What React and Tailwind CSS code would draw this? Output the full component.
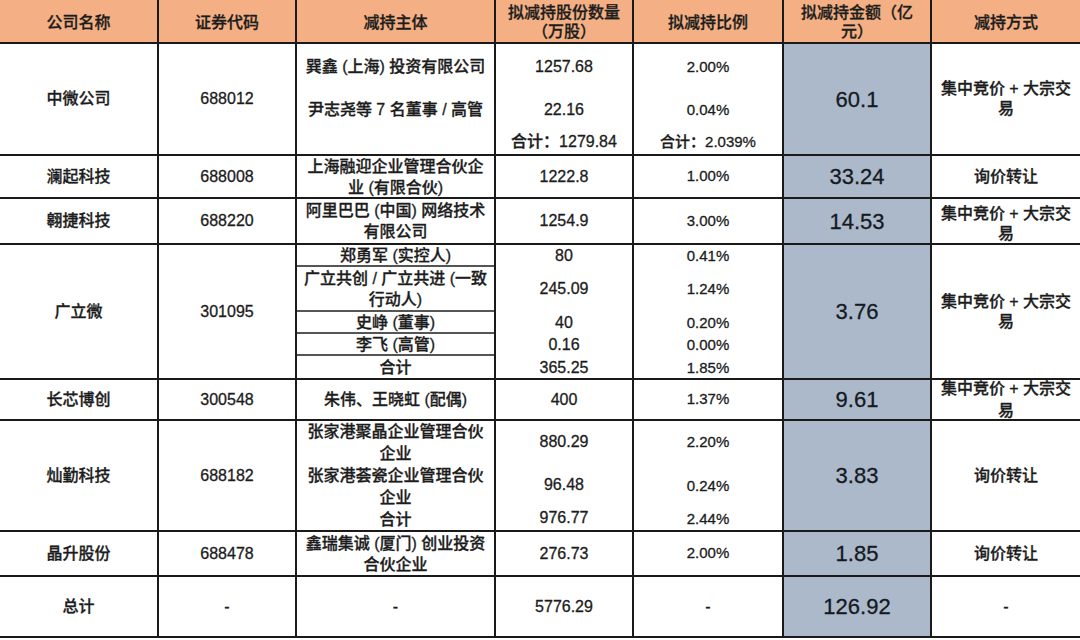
import React from "react";

function C({ children, className = "" }) {
  return (
    <div className={"bg-white flex items-center justify-center text-center " + className}>
      {children}
    </div>
  );
}

function H({ children }) {
  return (
    <div className="bg-[#f4b084] flex items-center justify-center text-center pt-[2px] px-[6px] leading-[19px]">
      <span>{children}</span>
    </div>
  );
}

function Big({ children }) {
  return (
    <div className="bg-[#acb9ca] flex items-center justify-center text-[22px] text-[#151a22]">
      {children}
    </div>
  );
}

function Blocks({ items, heights, pct }) {
  return (
    <div className="bg-white flex flex-col">
      {items.map((t, i) => (
        <div
          key={i}
          className={
            "flex items-center justify-center " + (pct ? "text-[15px] " : "") + (heights[i] === 0 ? "flex-1" : "")
          }
          style={heights[i] ? { height: heights[i] } : undefined}
        >
          {t}
        </div>
      ))}
    </div>
  );
}

function Sub({ items, lines }) {
  const hs = [20, 43, 20, 20, 22];
  return (
    <div className="bg-white flex flex-col">
      {items.map((t, i) => (
        <div
          key={i}
          className={
            "flex items-center justify-center text-center px-[6px] leading-[21px] " +
            (i > 0 ? (lines ? "border-t-2 border-[#555]" : "border-t-2 border-transparent") : "")
          }
          style={{ height: hs[i] + (i > 0 ? 2 : 0) }}
        >
          {t}
        </div>
      ))}
    </div>
  );
}

const MODE1 = "集中竞价 + 大宗交易";

export default function App() {
  return (
    <div className="w-[1080px] h-[640px] bg-white overflow-hidden font-['Liberation_Sans','Noto_Sans_CJK_SC',sans-serif] text-[16px] font-medium text-[#1c1c1c] [-webkit-text-stroke:0.3px_currentColor]">
      <div className="grid grid-cols-[157px_136px_197px_136px_148px_146px_148px] grid-rows-[42px_110px_41px_44px_133px_39px_109px_43px_59px] gap-[2px] bg-[#1a1a1a] pb-[2px]">
        {/* header */}
        <H>公司名称</H>
        <H>证券代码</H>
        <H>减持主体</H>
        <H>拟减持股份数量（万股）</H>
        <H>拟减持比例</H>
        <H>拟减持金额（亿元）</H>
        <H>减持方式</H>

        {/* 中微公司 */}
        <C>中微公司</C>
        <C>688012</C>
        <Blocks items={["巽鑫 (上海) 投资有限公司", "尹志尧等 7 名董事 / 高管", ""]} heights={[46, 40, 0]} />
        <Blocks items={["1257.68", "22.16", "合计：1279.84"]} heights={[46, 40, 0]} />
        <Blocks items={["2.00%", "0.04%", "合计：2.039%"]} heights={[46, 40, 0]} pct />
        <Big>60.1</Big>
        <C className="px-[8px] leading-[20px]">{MODE1}</C>

        {/* 澜起科技 */}
        <C>澜起科技</C>
        <C>688008</C>
        <C className="px-[6px] leading-[21px]">上海融迎企业管理合伙企业 (有限合伙)</C>
        <C>1222.8</C>
        <C className="text-[15px]">1.00%</C>
        <Big>33.24</Big>
        <C>询价转让</C>

        {/* 翱捷科技 */}
        <C>翱捷科技</C>
        <C>688220</C>
        <C className="px-[6px] leading-[21px]">阿里巴巴 (中国) 网络技术有限公司</C>
        <C>1254.9</C>
        <C className="text-[15px]">3.00%</C>
        <Big>14.53</Big>
        <C className="px-[8px] leading-[20px] pt-[6px]">{MODE1}</C>

        {/* 广立微 */}
        <C>广立微</C>
        <C>301095</C>
        <Sub lines items={["郑勇军 (实控人)", "广立共创 / 广立共进 (一致行动人)", "史峥 (董事)", "李飞 (高管)", "合计"]} />
        <Sub items={["80", "245.09", "40", "0.16", "365.25"]} />
        <div className="bg-white text-[15px] flex flex-col">
          <Sub items={["0.41%", "1.24%", "0.20%", "0.00%", "1.85%"]} />
        </div>
        <Big>3.76</Big>
        <C className="px-[8px] leading-[20px]">{MODE1}</C>

        {/* 长芯博创 */}
        <C>长芯博创</C>
        <C>300548</C>
        <C className="px-[6px]">朱伟、王晓虹 (配偶)</C>
        <C>400</C>
        <C className="text-[15px]">1.37%</C>
        <Big>9.61</Big>
        <C className="px-[8px] leading-[22px] overflow-hidden">{MODE1}</C>

        {/* 灿勤科技 */}
        <C>灿勤科技</C>
        <C>688182</C>
        <C className="px-[6px] leading-[22px] flex-col">
          <span>张家港聚晶企业管理合伙企业</span>
          <span>张家港荟瓷企业管理合伙企业</span>
          <span>合计</span>
        </C>
        <Blocks items={["880.29", "96.48", "976.77"]} heights={[44, 44, 0]} />
        <Blocks items={["2.20%", "0.24%", "2.44%"]} heights={[44, 44, 0]} pct />
        <Big>3.83</Big>
        <C>询价转让</C>

        {/* 晶升股份 */}
        <C>晶升股份</C>
        <C>688478</C>
        <C className="px-[6px] leading-[21px]">鑫瑞集诚 (厦门) 创业投资合伙企业</C>
        <C>276.73</C>
        <C className="text-[15px]">2.00%</C>
        <Big>1.85</Big>
        <C>询价转让</C>

        {/* 总计 */}
        <C>总计</C>
        <C>-</C>
        <C>-</C>
        <C>5776.29</C>
        <C>-</C>
        <Big>126.92</Big>
        <C>-</C>
      </div>
    </div>
  );
}
